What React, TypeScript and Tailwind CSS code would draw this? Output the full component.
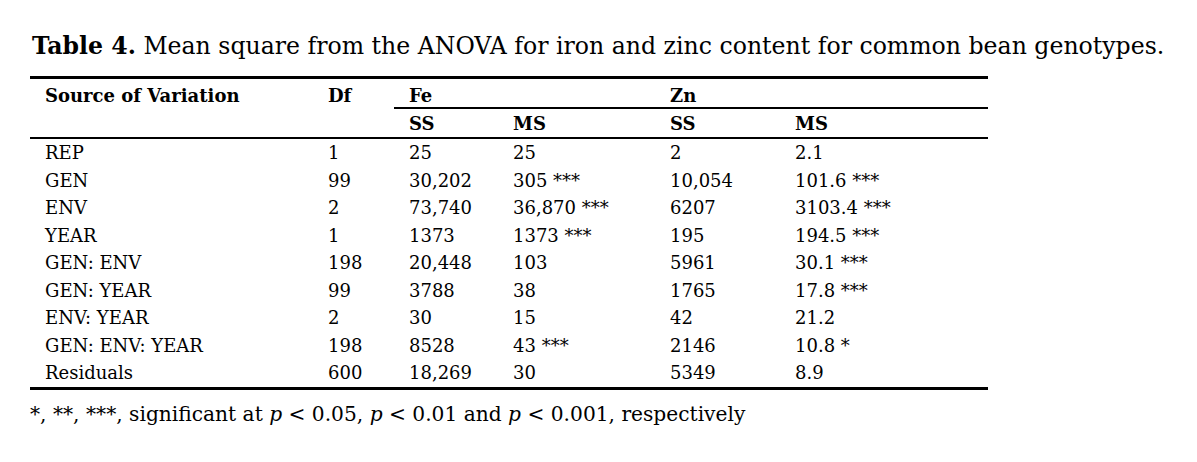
import React from "react";

const rows: string[][] = [
  ["REP", "1", "25", "25", "2", "2.1"],
  ["GEN", "99", "30,202", "305 ***", "10,054", "101.6 ***"],
  ["ENV", "2", "73,740", "36,870 ***", "6207", "3103.4 ***"],
  ["YEAR", "1", "1373", "1373 ***", "195", "194.5 ***"],
  ["GEN: ENV", "198", "20,448", "103", "5961", "30.1 ***"],
  ["GEN: YEAR", "99", "3788", "38", "1765", "17.8 ***"],
  ["ENV: YEAR", "2", "30", "15", "42", "21.2"],
  ["GEN: ENV: YEAR", "198", "8528", "43 ***", "2146", "10.8 *"],
  ["Residuals", "600", "18,269", "30", "5349", "8.9"],
];

export default function App() {
  return (
    <div
      className="w-[1197px] h-[462px] bg-white text-black pl-[30px] pt-[32px]"
      style={{ fontFamily: '"DejaVu Serif", serif' }}
    >
      <div className="pl-[2px] text-[23.6px] leading-[28px] whitespace-nowrap">
        <span className="font-bold">Table 4.</span> Mean square from the ANOVA for iron and zinc content for common bean genotypes.
      </div>
      <div className="mt-[16px] w-[958px] grid grid-cols-[283px_81px_104px_157px_125px_208px] text-[18px] leading-[21px]">
        <div className="col-span-6 h-[3px] bg-black" />
        <div className="pl-[15px] pt-[6px] pb-[1px] font-bold">Source of Variation</div>
        <div className="pl-[15px] pt-[6px] pb-[1px] font-bold">Df</div>
        <div className="col-span-2 pl-[15px] pt-[6px] pb-[1px] font-bold">Fe</div>
        <div className="col-span-2 pl-[15px] pt-[6px] pb-[1px] font-bold">Zn</div>
        <div className="col-start-3 col-span-4 h-[2px] bg-black" />
        <div className="col-start-3 pl-[15px] pt-[4px] pb-[3px] font-bold">SS</div>
        <div className="pl-[15px] pt-[4px] pb-[3px] font-bold">MS</div>
        <div className="pl-[15px] pt-[4px] pb-[3px] font-bold">SS</div>
        <div className="pl-[15px] pt-[4px] pb-[3px] font-bold">MS</div>
        <div className="col-span-6 h-[2px] bg-black" />
        {rows.map((r, i) =>
          r.map((c, j) => (
            <div key={`${i}-${j}`} className="pl-[15px] h-[27.5px] leading-[27.5px] whitespace-nowrap">
              {c}
            </div>
          ))
        )}
        <div className="col-span-6 h-[3px] bg-black" />
      </div>
      <div className="mt-[12px] text-[20.2px] leading-[24px] whitespace-nowrap">
        *, **, ***, significant at <i>p</i> &lt; 0.05, <i>p</i> &lt; 0.01 and <i>p</i> &lt; 0.001, respectively
      </div>
    </div>
  );
}
